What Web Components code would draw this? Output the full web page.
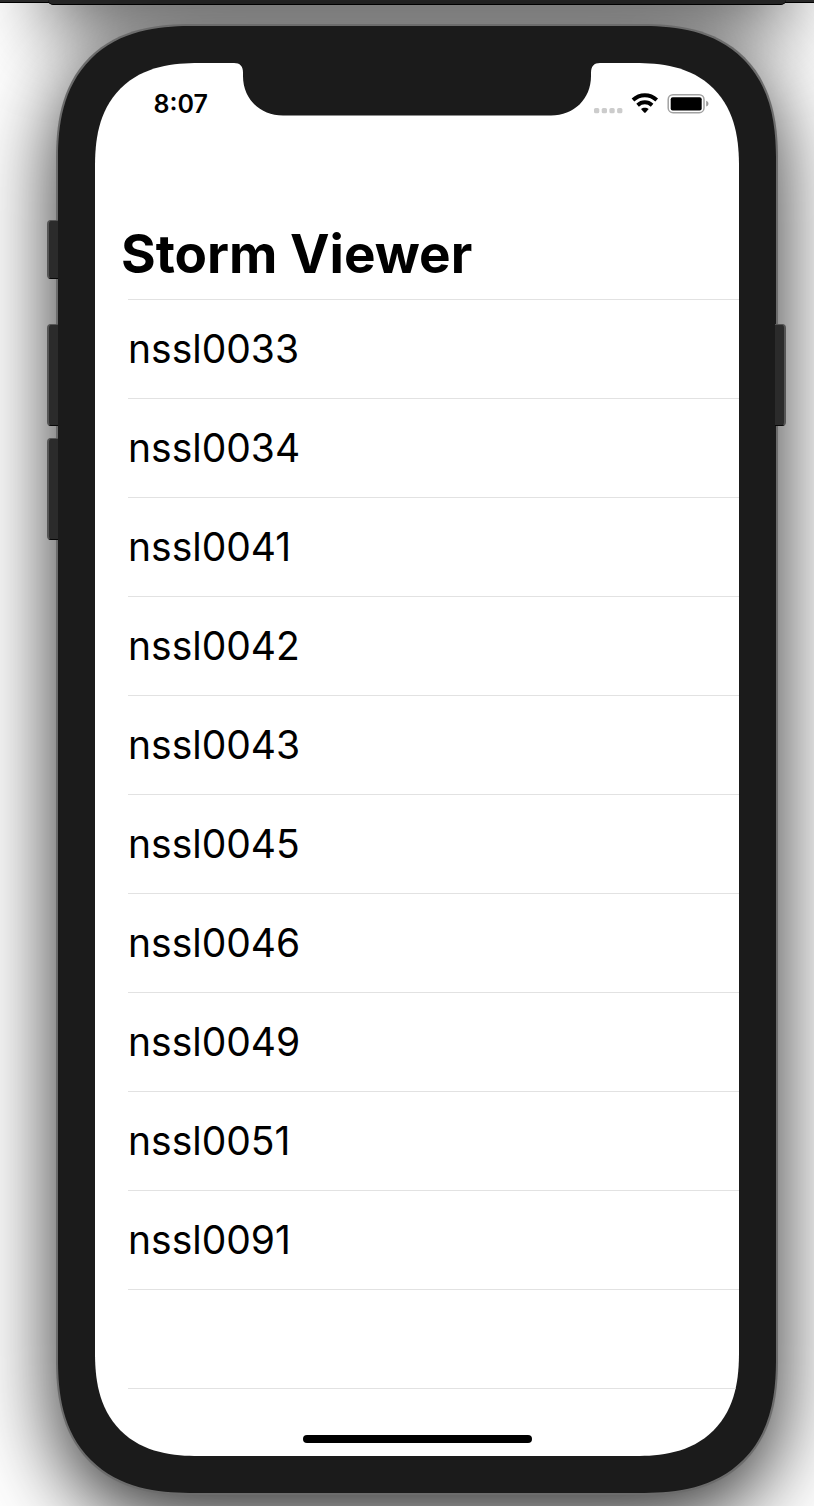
<!DOCTYPE html>
<html lang="en">
<head>
<meta charset="utf-8">
<meta name="viewport" content="width=device-width, initial-scale=1">
<title>Storm Viewer</title>
<style>
  html { background: #fff; }
  body { margin: 0; overflow-x: hidden; font-family: Inter, "Liberation Sans", sans-serif; color: #000; }
</style>
</head>
<body>
<sim-desktop>
  <phone-frame>
    <status-bar slot="status">8:07</status-bar>
    <storm-list heading="Storm Viewer">
      <storm-row>nssl0033</storm-row>
      <storm-row>nssl0034</storm-row>
      <storm-row>nssl0041</storm-row>
      <storm-row>nssl0042</storm-row>
      <storm-row>nssl0043</storm-row>
      <storm-row>nssl0045</storm-row>
      <storm-row>nssl0046</storm-row>
      <storm-row>nssl0049</storm-row>
      <storm-row>nssl0051</storm-row>
      <storm-row>nssl0091</storm-row>
      <storm-row empty></storm-row>
    </storm-list>
  </phone-frame>
</sim-desktop>
<script>
  function define(name, html, setup) {
    const template = document.createElement('template');
    template.innerHTML = html;
    customElements.define(name, class extends HTMLElement {
      constructor() {
        super();
        this.attachShadow({ mode: 'open' }).append(template.content.cloneNode(true));
      }
      connectedCallback() { if (setup) setup(this, this.shadowRoot); }
    });
  }

  define('sim-desktop', `
    <style>
      :host { display: flex; flex-direction: column; overflow: hidden; }
      .edge { height: 2px; background: #2a2a2a; border-bottom: 1px solid #000; padding: 0 28px 0 48px; }
      .toolbar { position: relative; height: 4px; background: #262626; border-bottom: 1px solid #000; border-radius: 0 0 10px 10px; }
      /* the window above casts its shadow down from outside the view */
      .toolbar::before { content: ""; position: absolute; z-index: -1; inset: -200px 0 0; border-radius: 10px;
        box-shadow: 0 28px 80px rgba(0,0,0,.6); }
      .stage { padding: 21px 36px 11px 56px; }
    </style>
    <div class="edge"><div class="toolbar"></div></div>
    <div class="stage"><slot></slot></div>`);

  define('phone-frame', `
    <style>
      :host { display: block; position: relative; }
      .body { position: relative; border: 2px solid #6c6c6c; padding: 37px; background: #1b1b1b; border-radius: 122px;
        box-shadow: 0 24px 84px rgba(0,0,0,.84); }
      .screen { display: flex; flex-direction: column; background: #fff; border-radius: 84px; overflow: hidden; }
      @supports (corner-shape: superellipse(1.3)) {
        .body { border-radius: 136px; corner-shape: superellipse(1.3); }
        .screen { border-radius: 104px; corner-shape: superellipse(1.3); }
      }
      .home { align-self: center; width: 229px; height: 8px; margin: 46px 0 13px; border-radius: 4px; background: #000; }
      .key { position: absolute; left: -9px; width: 9px; height: 100px; background: #2b2b2b;
        border: 1px solid #555; border-left-width: 2px; border-bottom-color: #080808; border-right: 0; border-radius: 4px 0 0 4px; }
      .mute { top: 196px; height: 57px; }
      .up { top: 300px; }
      .down { top: 414px; }
      .power { top: 300px; left: auto; right: -8px; border-left: 0; border-right: 2px solid #555; border-radius: 0 4px 4px 0; }
    </style>
    <div class="body">
      <div class="screen">
        <slot name="status"></slot>
        <slot></slot>
        <div class="home"></div>
      </div>
    </div>
    <div class="key mute"></div>
    <div class="key up"></div>
    <div class="key down"></div>
    <div class="key power"></div>`);

  define('status-bar', `
    <style>
      :host { display: grid; grid-template-columns: 1fr 348px 1fr; height: 53px; }
      time { align-self: end; justify-self: end; margin-right: 35px; padding-top: 24px; font-size: 25px; line-height: 34px; font-weight: 600; height: 29px; }
      svg { display: block; overflow: visible; }
      .icons { align-self: end; display: flex; align-items: flex-end; padding-left: 3px; }
    </style>
    <time><slot></slot></time>
    <svg viewBox="0 0 348 52" height="52" fill="#1b1b1b" aria-hidden="true">
      <path d="M-9 0C-3 0 0 3 0 10V13C0 36 17 52.5 40 52.5H308C331 52.5 348 36 348 13V10C348 3 351 0 357 0Z"/>
    </svg>
    <div class="icons">
      <svg width="115" height="24" viewBox="0 0 115 24" role="img" aria-label="Signal, Wi-Fi and battery">
        <g fill="#ccc">
          <rect x="0" y="16" width="5.3" height="5.3" rx="1.6"/><rect x="7.7" y="16" width="5.3" height="5.3" rx="1.6"/>
          <rect x="15.4" y="16" width="5.3" height="5.3" rx="1.6"/><rect x="23.1" y="16" width="5.3" height="5.3" rx="1.6"/>
        </g>
        <g fill="none" stroke="#000" stroke-width="3.9">
          <path d="M39 8C45.9 1.6 55.8 1.6 62.7 8"/>
          <path d="M43.6 13.2C47.9 9.3 53.8 9.3 58.1 13.2"/>
        </g>
        <path d="M47 17.1C49.2 15.2 52.5 15.2 54.7 17.1L51.9 20.3Q50.9 21.4 49.9 20.3Z"/>
        <rect x="74.2" y="2.7" width="35.8" height="18" rx="4.8" fill="none" stroke="#a2a2a2" stroke-width="1.5"/>
        <rect x="76.7" y="5.2" width="31" height="13.3" rx="2"/>
        <path d="M112.2 8.8C115.2 9.6 115.2 13.8 112.2 14.6Z" fill="#999"/>
      </svg>
    </div>`);

  define('storm-list', `
    <style>
      :host { display: block; }
      h1 { margin: 0; padding: 105px 26px 12px; font-size: 53px; line-height: 66px; font-weight: 700; }
      nav { display: flex; flex-direction: column; margin-left: 33px; border-bottom: 1px solid #e2e2e2; }
    </style>
    <h1></h1>
    <nav><slot></slot></nav>`,
    (host, root) => { root.querySelector('h1').textContent = host.getAttribute('heading'); });

  define('storm-row', `
    <style>
      :host { display: block; border-top: 1px solid #e2e2e2; }
      a { display: block; height: 98px; font-size: 39px; line-height: 98px; color: inherit; text-decoration: none; }
    </style>
    <a href="#"><slot></slot></a>`,
    (host, root) => { if (host.hasAttribute('empty')) root.querySelector('a').removeAttribute('href'); });
</script>
</body>
</html>
